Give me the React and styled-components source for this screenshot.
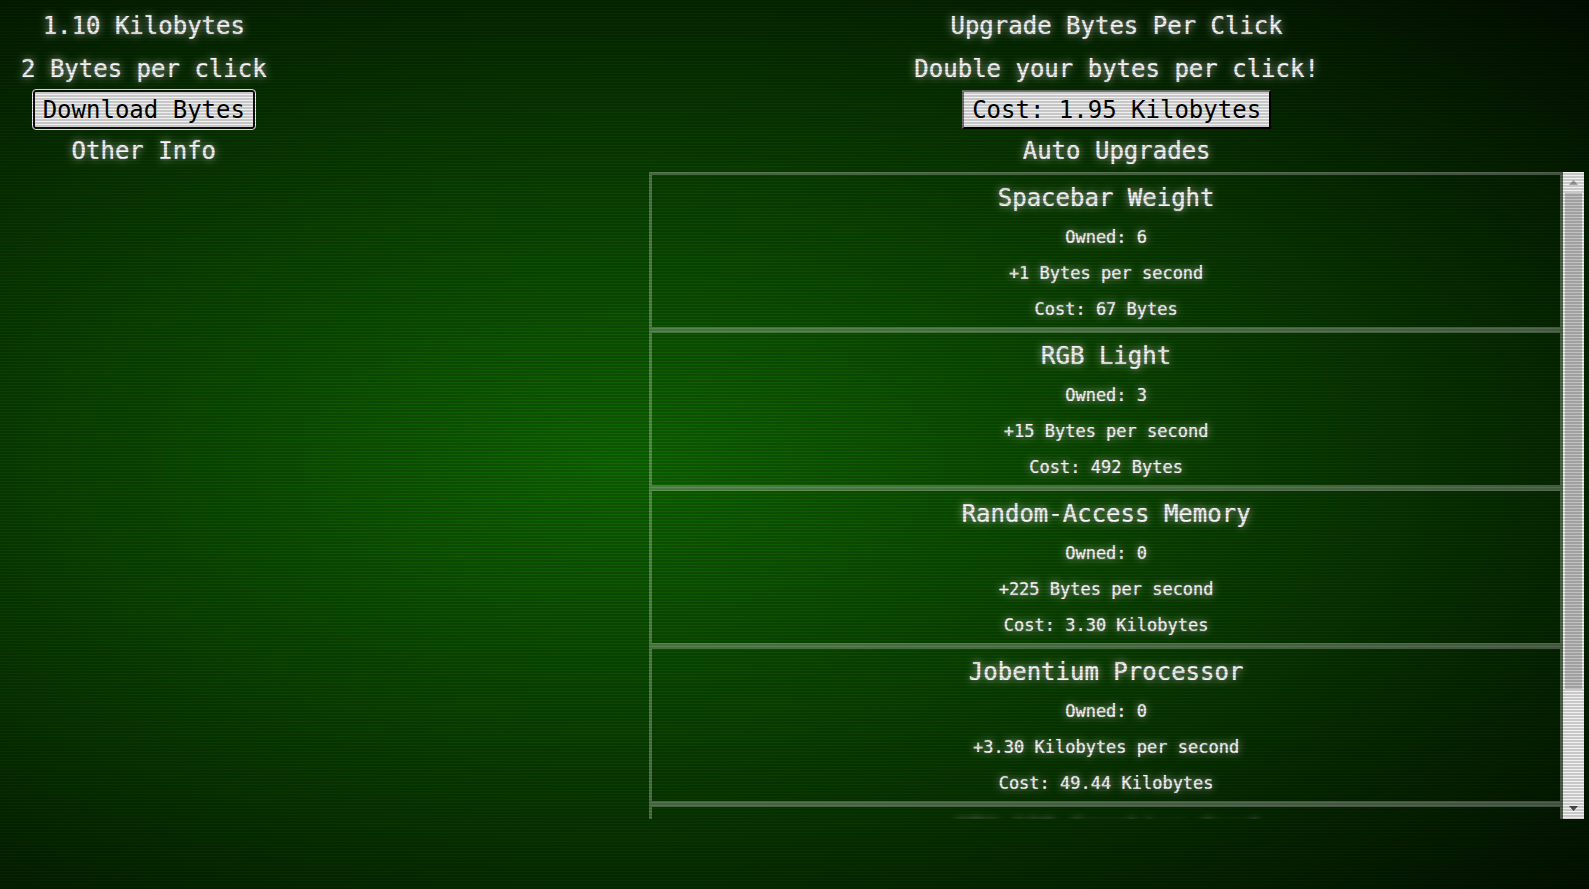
import React from "react";
import styled, { createGlobalStyle } from "styled-components";

const glow = "0 0 1px rgba(255, 255, 255, 0.7), 0 0 8px #c8c8c8";

const GlobalStyle = createGlobalStyle`
  * { box-sizing: border-box; }
  html, body, #root { height: 100%; }
  body {
    margin: 0;
    overflow: hidden;
    background: #000 radial-gradient(ellipse farthest-corner at 39% 52%, #116a00 0%, #000 116%);
    color: #fff;
    font-family: "DejaVu Sans Mono", "Liberation Mono", monospace;
  }
`;

const Screen = styled.div`
  min-height: 100%;
  display: flex;
  justify-content: space-between;
  align-items: flex-start;
  padding: 5px;
  &::after {
    content: "";
    position: fixed;
    inset: 0;
    pointer-events: none;
    background: repeating-linear-gradient(0deg, rgba(0, 0, 0, 0.17) 0 2px, transparent 2px 3px);
  }
`;

const Column = styled.section`
  display: flex;
  flex-direction: column;
  align-items: center;
`;

const Stats = styled(Column)`
  padding: 0 16px;
`;

const Shop = styled(Column)`
  width: 59.2%;
`;

const Line = styled.p`
  margin: 0;
  height: 43px;
  font-size: 24px;
  line-height: 43px;
  text-shadow: ${glow};
  white-space: nowrap;
`;

const Caption = styled(Line)`
  height: 42px;
`;

const SectionLabel = styled(Line)`
  line-height: 45px;
`;

const ActionButton = styled.button`
  height: 39px;
  padding: 0 8px;
  border: 2px outset #555;
  border-color: #777 #222 #222 #777;
  border-radius: 0;
  background: #f0f0f0;
  color: #000;
  font: inherit;
  font-size: 24px;
  line-height: 32px;
`;

const FocusedButton = styled(ActionButton)`
  border: 2px solid #101010;
  border-radius: 3px;
  outline: 1px solid #fff;
`;

const Viewport = styled.div`
  width: 100%;
  height: calc(100vh - 242px);
  display: flex;
  align-items: stretch;
`;

const List = styled.ul`
  flex: 1;
  height: 100%;
  overflow: hidden;
  margin: 0;
  padding: 0;
  list-style: none;
`;

const Item = styled.li`
  height: 158px;
  border: 3px solid rgba(255, 255, 255, 0.3);
  text-align: center;
  text-shadow: ${glow};
`;

const ItemName = styled.h2`
  margin: 0;
  height: 44px;
  font-size: 24px;
  font-weight: 400;
  line-height: 46px;
`;

const Detail = styled.p`
  margin: 0;
  font-size: 17px;
  line-height: 36px;
`;

const Scrollbar = styled.div`
  width: 21px;
  padding: 0 2px;
  background: #f1f1f1;
  display: flex;
  flex-direction: column;
`;

const Arrow = styled.span`
  height: 21px;
  flex: none;
  display: flex;
  align-items: center;
  justify-content: center;
  color: ${(p) => (p.$dim ? "#a3a3a3" : "#505050")};
`;

const Track = styled.div`
  flex: 1;
`;

const Thumb = styled.div`
  height: 82%;
  background: #c1c1c1;
`;

const upgrades = [
  { name: "Spacebar Weight", details: ["Owned: 6", "+1 Bytes per second", "Cost: 67 Bytes"] },
  { name: "RGB Light", details: ["Owned: 3", "+15 Bytes per second", "Cost: 492 Bytes"] },
  { name: "Random-Access Memory", details: ["Owned: 0", "+225 Bytes per second", "Cost: 3.30 Kilobytes"] },
  { name: "Jobentium Processor", details: ["Owned: 0", "+3.30 Kilobytes per second", "Cost: 49.44 Kilobytes"] },
  { name: "GTX 100 Graphics Card", details: [] },
];

export default function App() {
  return (
    <Screen>
      <GlobalStyle />
      <Stats>
        <Line>1.10 Kilobytes</Line>
        <Caption>2 Bytes per click</Caption>
        <FocusedButton type="button">Download Bytes</FocusedButton>
        <SectionLabel>Other Info</SectionLabel>
      </Stats>
      <Shop>
        <Line>Upgrade Bytes Per Click</Line>
        <Caption>Double your bytes per click!</Caption>
        <ActionButton type="button">Cost: 1.95 Kilobytes</ActionButton>
        <SectionLabel>Auto Upgrades</SectionLabel>
        <Viewport>
          <List>
            {upgrades.map(({ name, details }) => (
              <Item key={name}>
                <ItemName>{name}</ItemName>
                {details.map((text) => (
                  <Detail key={text}>{text}</Detail>
                ))}
              </Item>
            ))}
          </List>
          <Scrollbar aria-hidden="true">
            <Arrow $dim>
              <svg width="9" height="5" viewBox="0 0 9 5"><path d="M0 5L4.500 0L9 5Z" fill="currentColor" /></svg>
            </Arrow>
            <Track><Thumb /></Track>
            <Arrow>
              <svg width="9" height="5" viewBox="0 0 9 5"><path d="M0 0L4.500 5L9 0Z" fill="currentColor" /></svg>
            </Arrow>
          </Scrollbar>
        </Viewport>
      </Shop>
    </Screen>
  );
}
